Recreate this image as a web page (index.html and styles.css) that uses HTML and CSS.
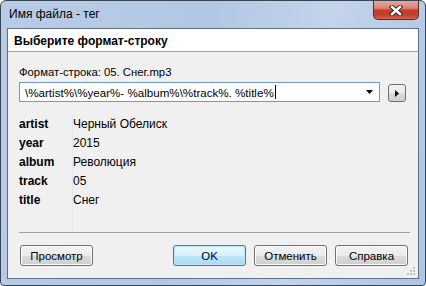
FILE: index.html
```html
<!DOCTYPE html>
<html lang="ru">
<head>
    <meta charset="UTF-8">
    <meta name="viewport" content="width=device-width, initial-scale=1.0">
    <title>Имя файла - тег</title>
    <link rel="stylesheet" href="styles.css">
</head>
<body>
    <div class="window">
        <div class="titlebar">
            <span class="title">Имя файла - тег</span>
            <button class="close-btn">
                <svg width="14" height="11" viewBox="0 0 14 11">
                    <path d="M3 2 L11 9 M11 2 L3 9" stroke="#3b2a2a" stroke-width="4.4" stroke-linecap="square"/>
                    <path d="M3 2 L11 9 M11 2 L3 9" stroke="#ffffff" stroke-width="2.4" stroke-linecap="square"/>
                </svg>
            </button>
        </div>
        <div class="client">
            <div class="header">Выберите формат-строку</div>
            <div class="content">
                <div class="caption">Формат-строка: 05. Снег.mp3</div>
                <div class="format-row">
                    <div class="combo">
                        <span class="combo-text">\%artist%\%year%- %album%\%track%. %title%<span class="caret"></span></span>
                        <svg class="combo-arrow" width="7" height="4" viewBox="0 0 7 4">
                            <path d="M0 0 H7 L3.5 4 Z" fill="#000"/>
                        </svg>
                    </div>
                    <button class="arrow-btn">
                        <svg width="4" height="7" viewBox="0 0 4 7">
                            <path d="M0 0 L4 3.5 L0 7 Z" fill="#000"/>
                        </svg>
                    </button>
                </div>
                <div class="tags">
                    <div class="keys">
                        <div class="tag-row">artist</div>
                        <div class="tag-row">year</div>
                        <div class="tag-row">album</div>
                        <div class="tag-row">track</div>
                        <div class="tag-row">title</div>
                    </div>
                    <div class="values">
                        <div class="tag-row">Черный Обелиск</div>
                        <div class="tag-row">2015</div>
                        <div class="tag-row">Революция</div>
                        <div class="tag-row">05</div>
                        <div class="tag-row">Снег</div>
                    </div>
                </div>
                <div class="separator"></div>
                <div class="buttons">
                    <button class="btn preview-btn">Просмотр</button>
                    <button class="btn default-btn">OK</button>
                    <button class="btn">Отменить</button>
                    <button class="btn">Справка</button>
                </div>
            </div>
            <svg class="grip" width="8" height="8" viewBox="0 0 8 8">
                <rect x="6" y="0" width="2" height="2" fill="#bcc4ce"/>
                <rect x="3" y="3" width="2" height="2" fill="#bcc4ce"/>
                <rect x="6" y="3" width="2" height="2" fill="#bcc4ce"/>
                <rect x="0" y="6" width="2" height="2" fill="#bcc4ce"/>
                <rect x="3" y="6" width="2" height="2" fill="#bcc4ce"/>
                <rect x="6" y="6" width="2" height="2" fill="#bcc4ce"/>
            </svg>
        </div>
    </div>
</body>
</html>
```

FILE: styles.css
```css
body {
    margin: 0;
    font-family: "Liberation Sans", Arial, sans-serif;
    font-size: 11px;
    color: #000;
    background: #ffffff;
}
.window {
    width: 426px;
    height: 286px;
    box-sizing: border-box;
    border: 1px solid #3a4554;
    border-radius: 6px 6px 4px 4px;
    padding: 0 6px 6px;
    display: flex;
    flex-direction: column;
    background: linear-gradient(100deg, #b8cce6 0%, #b2c7e3 45%, #c3d4eb 70%, #afc5e2 100%);
}
.titlebar {
    height: 27px;
    display: flex;
    align-items: center;
    padding-left: 2px;
}
.title {
    font-size: 12px;
    color: #000;
    padding-bottom: 1px;
}
.close-btn {
    align-self: flex-start;
    margin-left: auto;
    width: 46px;
    height: 19px;
    padding: 0;
    border: 1px solid #5a2b27;
    border-top: none;
    border-radius: 0 0 5px 5px;
    background: linear-gradient(#e6a79b 0%, #d98476 40%, #c53d2c 52%, #c4412e 80%, #d2664f 100%);
    display: flex;
    align-items: center;
    justify-content: center;
}
.client {
    flex: 1;
    border: 1px solid #5d6f85;
    background: #f0f0f0;
    display: flex;
    flex-direction: column;
    position: relative;
}
.header {
    height: 23px;
    box-sizing: border-box;
    background: #ffffff;
    border-bottom: 1px solid #a0a0a0;
    padding: 5px 6px 0;
    font-size: 12px;
    font-weight: bold;
    line-height: 15px;
}
.content {
    flex: 1;
    display: flex;
    flex-direction: column;
    padding: 13px 10px 12px 11px;
}
.caption {
    line-height: 14px;
    font-size: 11.3px;
}
.format-row {
    display: flex;
    align-items: flex-end;
    margin-top: 3px;
}
.combo {
    width: 361px;
    height: 20px;
    box-sizing: border-box;
    border: 1px solid #6e9ac8;
    background: #ffffff;
    display: flex;
    align-items: center;
    padding: 0 6px 0 5px;
}
.combo-text {
    flex: 1;
    white-space: nowrap;
    display: flex;
    align-items: center;
    font-size: 11.6px;
}
.caret {
    display: inline-block;
    width: 1px;
    height: 14px;
    background: #000;
    margin-left: 1px;
}
.arrow-btn {
    margin-left: 8px;
    width: 18px;
    height: 18px;
    padding: 0;
    border: 1px solid #707070;
    border-radius: 3px;
    background: linear-gradient(#f2f2f2 0%, #ebebeb 50%, #dddddd 51%, #cfcfcf 100%);
    display: flex;
    align-items: center;
    justify-content: center;
}
.tags {
    flex: 1;
    display: flex;
    margin-top: 13px;
    font-size: 12px;
}
.keys {
    width: 53px;
    font-weight: bold;
}
.values {
    flex: 1;
    border-left: 1px solid #e2e6ec;
}
.tag-row {
    height: 19px;
    line-height: 19px;
}
.separator {
    border-top: 1px solid #a0a0a0;
    margin-right: -2px;
}
.buttons {
    display: flex;
    gap: 8px;
    margin-top: 12px;
}
.btn {
    width: 73px;
    height: 21px;
    padding: 0;
    font-family: "Liberation Sans", Arial, sans-serif;
    font-size: 11.5px;
    color: #000;
    border: 1px solid #707070;
    border-radius: 3px;
    background: linear-gradient(#f2f2f2 0%, #ebebeb 50%, #dddddd 51%, #cfcfcf 100%);
    box-shadow: inset 0 0 0 1px #fcfcfc;
}
.preview-btn {
    margin-left: 1px;
    margin-right: auto;
}
.default-btn {
    border-color: #3c7fb1;
    background: linear-gradient(#eaf6fd 0%, #d9f0fc 50%, #bee6fd 51%, #a7d9f5 100%);
    box-shadow: inset 0 0 0 1px #bfe4f7;
}
.grip {
    position: absolute;
    right: 3px;
    bottom: 3px;
}
```
